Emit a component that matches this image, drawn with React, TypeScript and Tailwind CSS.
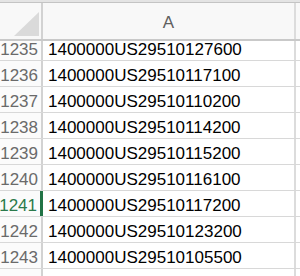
import React from 'react';

const rows = [
  { n: 1235, v: '1400000US29510127600' },
  { n: 1236, v: '1400000US29510117100' },
  { n: 1237, v: '1400000US29510110200' },
  { n: 1238, v: '1400000US29510114200' },
  { n: 1239, v: '1400000US29510115200' },
  { n: 1240, v: '1400000US29510116100' },
  { n: 1241, v: '1400000US29510117200' },
  { n: 1242, v: '1400000US29510123200' },
  { n: 1243, v: '1400000US29510105500' },
  { n: 1244, v: '' },
];

export default function App() {
  return (
    <div className="w-[300px] h-[276px] overflow-hidden bg-white font-['Liberation_Sans',Arial,sans-serif] text-[17px]">
      {/* top edge */}
      <div className="h-[3px] bg-[#e4e4e4] border-b border-[#c4c4c4]" />

      {/* column header */}
      <div className="flex h-[38px] border-b-2 border-[#c9c9c9] bg-[#f8f8f8]">
        <div className="w-[43px] shrink-0 border-r-2 border-[#d2d2d2] relative">
          <svg className="absolute left-0 top-0" width="41" height="36" viewBox="0 0 41 36">
            <polygon points="39,9 39,33 14,33" fill="#dadada" />
          </svg>
        </div>
        <div className="w-[253px] shrink-0 border-r-2 border-[#dcdcdc] flex items-center justify-center pt-[4px] text-[#5f5f5f]">
          A
        </div>
        <div className="flex-1" />
      </div>

      {/* rows */}
      {rows.map((r, i) => {
        const selected = r.n === 1241;
        return (
          <div
            key={r.n}
            className={`flex border-b border-[#d8d8d8] ${i === 0 ? 'h-[20px]' : 'h-[26px]'}`}
          >
            <div
              className={`w-[43px] shrink-0 flex items-end justify-end pr-[3px] leading-[20px] bg-[#fbfbfb] whitespace-nowrap ${
                selected
                  ? 'border-r-[3px] border-[#217346] text-[#2b7a4b] pr-[2px]'
                  : 'border-r-2 border-[#d2d2d2] text-[#6a6a6a]'
              }`}
            >
              {r.n === 1244 ? '' : r.n}
            </div>
            <div className="w-[253px] shrink-0 border-r-2 border-[#dcdcdc] flex items-end pl-[5px] leading-[20px] text-black whitespace-nowrap">
              {r.v}
            </div>
            <div className="flex-1" />
          </div>
        );
      })}
    </div>
  );
}
